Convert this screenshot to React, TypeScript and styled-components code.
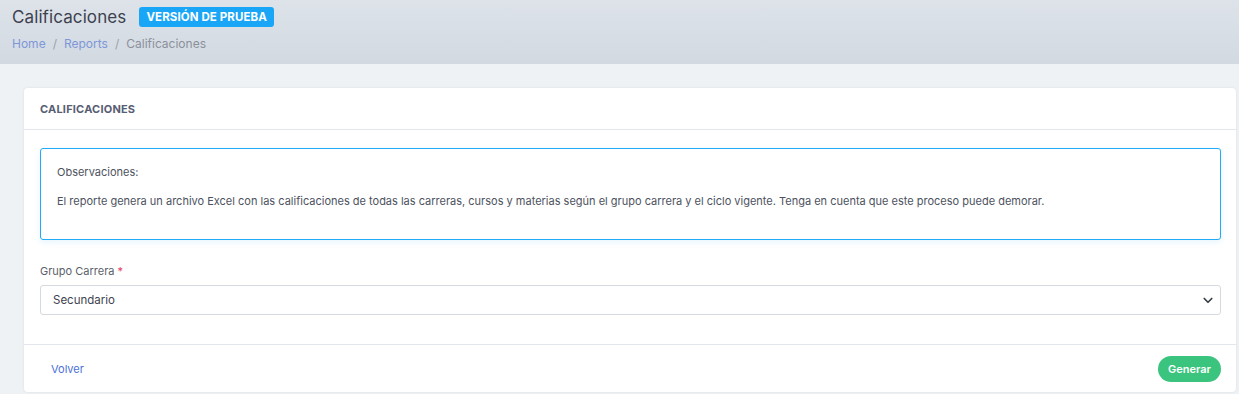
import styled, { createGlobalStyle } from "styled-components";

const GlobalStyle = createGlobalStyle`
  html, body {
    margin: 0;
    padding: 0;
    background: #eef2f5;
    font-family: "Inter", "Open Sans", sans-serif;
    color: #5b5f6b;
  }
  * { box-sizing: border-box; }
`;

const Page = styled.div`
  width: 1239px;
  height: 394px;
  overflow: hidden;
  background: #eef2f5;
`;

const Header = styled.header`
  height: 64px;
  padding: 7px 12px 0;
  background: linear-gradient(180deg, #dde3e9 0%, #d2d9e1 100%);
`;

const TitleRow = styled.div`
  display: flex;
  align-items: center;
  gap: 13px;
`;

const PageTitle = styled.h1`
  margin: 0;
  font-size: 17px;
  font-weight: 400;
  color: #3d4150;
  letter-spacing: 0.1px;
`;

const Badge = styled.span`
  background: #1aa6f7;
  color: #fff;
  font-size: 11.5px;
  font-weight: 700;
  padding: 3px 7px;
  border-radius: 3px;
  letter-spacing: 0.1px;
`;

const Crumbs = styled.nav`
  display: flex;
  gap: 7px;
  margin-top: 9px;
  font-size: 12px;
`;

const Crumb = styled.span<{ $active?: boolean }>`
  color: ${({ $active }) => ($active ? "#8b919b" : "#7d97d8")};
`;

const Sep = styled.span`
  color: #9aa1ab;
`;

const Body = styled.main`
  padding: 24px 3px 0 24px;
`;

const Card = styled.section`
  background: #fff;
  border-radius: 4px;
  box-shadow: 0 0 3px rgba(0, 0, 0, 0.08);
`;

const CardHeader = styled.div`
  height: 42px;
  display: flex;
  align-items: center;
  padding: 0 16px;
  border-bottom: 1px solid #e3e7ed;
`;

const CardTitle = styled.h2`
  margin: 0;
  font-size: 11px;
  font-weight: 700;
  color: #575d72;
  letter-spacing: 0.2px;
`;

const CardBody = styled.div`
  padding: 18px 15px 29px 16px;
`;

const Notice = styled.div`
  border: 1px solid #1fabf5;
  border-radius: 3px;
  padding: 16px 16px 31px;
  box-shadow: 0 2px 6px rgba(31, 171, 245, 0.12);
  font-size: 11px;
  color: #4d5260;
`;

const NoticeLine = styled.p`
  margin: 0;
  & + & {
    margin-top: 15px;
  }
`;

const Field = styled.div`
  margin-top: 24px;
`;

const Label = styled.label`
  display: block;
  font-size: 11px;
  color: #5b5f6b;
  margin-bottom: 7px;
`;

const Required = styled.span`
  color: #e4405f;
`;

const SelectBox = styled.div`
  height: 30px;
  border: 1px solid #d5d9e0;
  border-radius: 3px;
  display: flex;
  align-items: center;
  justify-content: space-between;
  padding: 0 6px 0 12px;
  font-size: 11.5px;
  color: #3f4350;
`;

const Footer = styled.div`
  border-top: 1px solid #e3e7ed;
  height: 48px;
  display: flex;
  align-items: center;
  justify-content: space-between;
  padding: 0 15px 0 27px;
`;

const BackLink = styled.a`
  font-size: 11px;
  color: #4b6fd9;
  text-decoration: none;
`;

const PrimaryButton = styled.button`
  border: none;
  background: #3bc47e;
  color: #fff;
  font-family: inherit;
  font-weight: 600;
  font-size: 11px;
  height: 26px;
  padding: 0 10px;
  border-radius: 13px;
`;

export default function App() {
  return (
    <Page>
      <GlobalStyle />
      <Header>
        <TitleRow>
          <PageTitle>Calificaciones</PageTitle>
          <Badge>VERSIÓN DE PRUEBA</Badge>
        </TitleRow>
        <Crumbs>
          <Crumb>Home</Crumb>
          <Sep>/</Sep>
          <Crumb>Reports</Crumb>
          <Sep>/</Sep>
          <Crumb $active>Calificaciones</Crumb>
        </Crumbs>
      </Header>
      <Body>
        <Card>
          <CardHeader>
            <CardTitle>CALIFICACIONES</CardTitle>
          </CardHeader>
          <CardBody>
            <Notice>
              <NoticeLine>Observaciones:</NoticeLine>
              <NoticeLine>
                El reporte genera un archivo Excel con las calificaciones de todas las carreras, cursos y materias según el grupo carrera y el ciclo vigente. Tenga en cuenta que este proceso puede demorar.
              </NoticeLine>
            </Notice>
            <Field>
              <Label>
                Grupo Carrera <Required>*</Required>
              </Label>
              <SelectBox>
                <span>Secundario</span>
                <svg width="12" height="12" viewBox="0 0 16 16" fill="none">
                  <path d="M3 6l5 5 5-5" stroke="#343a40" strokeWidth="2.2" strokeLinecap="round" strokeLinejoin="round" />
                </svg>
              </SelectBox>
            </Field>
          </CardBody>
          <Footer>
            <BackLink href="#">Volver</BackLink>
            <PrimaryButton>Generar</PrimaryButton>
          </Footer>
        </Card>
      </Body>
    </Page>
  );
}
